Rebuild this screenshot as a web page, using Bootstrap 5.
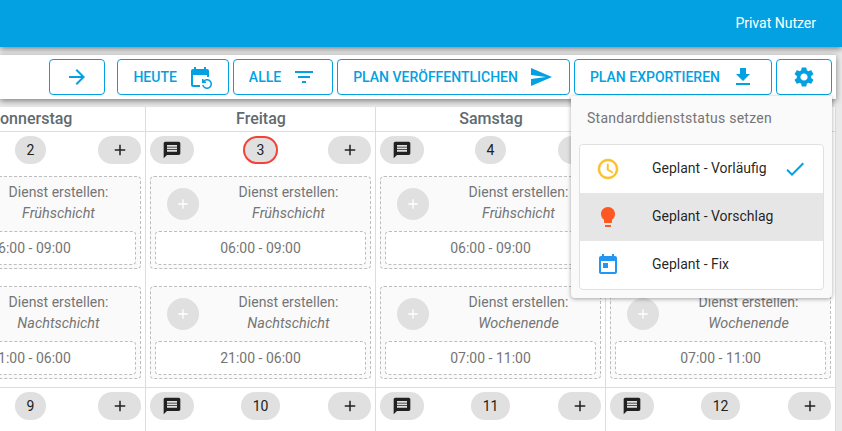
<!DOCTYPE html>
<html lang="de">
  <head>
    <meta charset="UTF-8" />
    <meta name="viewport" content="width=device-width, initial-scale=1" />
    <title>Dienstplan</title>
    <link
      href="https://cdn.jsdelivr.net/npm/bootstrap@5.3.0/dist/css/bootstrap.min.css"
      rel="stylesheet"
    />
    <style>
      html,
      body {
        height: 100%;
        overflow: hidden;
      }
      body {
        background: #e9e9e9;
        font-family: Roboto, "Liberation Sans", sans-serif;
        font-size: 14px;
      }
      svg {
        fill: currentColor;
        display: block;
      }
      .top-bar {
        height: 47px;
        background: #03a1e2;
        color: #fff;
        padding-right: 26px;
        box-shadow: 0 2px 6px rgba(0, 0, 0, 0.45);
        position: relative;
        z-index: 3;
      }
      .page-area {
        width: 836px;
      }
      .tool-bar {
        height: 44px;
        margin-top: 8px;
        padding-right: 4px;
        background: #fff;
        box-shadow: 0 2px 6px rgba(0, 0, 0, 0.45);
        position: relative;
        z-index: 2;
      }
      .tool-btn {
        height: 36px;
        padding: 0 16px 0 15px;
        column-gap: 11px;
        color: #03a1e2;
        background: #fff;
        border: 1px solid #03a1e2;
        border-radius: 4px;
        font-size: 14px;
        font-weight: 500;
        text-transform: uppercase;
      }
      .tool-btn:hover {
        color: #03a1e2;
        background: #fff;
        border-color: #03a1e2;
      }
      .icon-only {
        width: 56px;
        padding: 0;
      }
      .status-menu {
        position: absolute;
        top: 41px;
        right: 4px;
        width: 261px;
        height: 202px;
        padding: 48px 8px 8px;
        background: #fafafa;
        border-radius: 0 0 4px 4px;
        box-shadow: 0 1px 4px rgba(0, 0, 0, 0.35);
      }
      .status-title {
        position: absolute;
        top: 12px;
        left: 16px;
        color: #757575;
        letter-spacing: 0.25px;
      }
      .status-item {
        height: 48px;
        padding: 0 16px;
        border: 0;
        color: rgba(0, 0, 0, 0.87);
      }
      .status-item.picked {
        background: #e6e6e6;
      }
      .status-label {
        margin-left: 32px;
        padding-bottom: 2px;
      }
      .status-list {
        border: 1px solid #e0e0e0;
        border-radius: 4px;
      }
      .clock-icon {
        color: #fbc02d;
        stroke: currentColor;
        stroke-width: 0.5;
      }
      .bulb-icon {
        color: #ff5722;
      }
      .fix-icon {
        color: #2196f3;
      }
      .check-icon {
        color: #03a1e2;
      }
      .week-head,
      .week-row {
        margin-left: -84px;
      }
      .week-area {
        background: #fff;
        margin-top: 8px;
        height: 324px;
        overflow: hidden;
      }
      .day-head {
        width: 230px;
        height: 25px;
        flex: none;
        padding-left: 1px;
        line-height: 24px;
        text-align: center;
        font-size: 16px;
        font-weight: 500;
        color: #5f6b70;
        border-right: 1px solid #ddd;
        border-bottom: 1px solid #ddd;
      }
      .day-cell {
        width: 230px;
        flex: none;
        padding: 4px 4px 8px 4px;
        border-right: 1px solid #ddd;
        border-bottom: 1px solid #ddd;
      }
      /* the second week runs on below the fold */
      #rowTwo .day-cell {
        padding-bottom: 60px;
      }
      .chip-row {
        display: grid;
        grid-template-columns: 1fr auto 1fr;
        align-items: center;
        height: 28px;
      }
      .chip-gray {
        height: 28px;
        background: #e0e0e0;
        border-radius: 14px;
        display: flex;
        align-items: center;
        justify-content: center;
        color: #212121;
      }
      .chip-note {
        width: 44px;
        justify-self: start;
      }
      .chip-add {
        width: 43px;
        justify-self: end;
      }
      .chip-date {
        padding: 0 12px;
      }
      .chip-today {
        border: 2px solid #f44336;
        padding: 0 12px;
      }
      .shift-box {
        height: 93px;
        margin-top: 12px;
        padding: 0 4px 4px;
        background: #fafafa;
        border: 1px dashed #bdbdbd;
        border-radius: 4px;
        color: #757575;
      }
      .shift-box + .shift-box {
        margin-top: 17px;
      }
      .shift-top {
        height: 54px;
        padding-left: 12px;
      }
      .shift-plus {
        width: 32px;
        height: 32px;
        flex: none;
        background: #e0e0e0;
        border-radius: 50%;
        color: #fff;
        display: flex;
        align-items: center;
        justify-content: center;
      }
      .shift-text {
        line-height: 21px;
        text-align: center;
        padding-left: 12px;
        padding-bottom: 2px;
        flex: 1;
      }
      .shift-text em {
        font-size: 14.4px;
      }
      .shift-time {
        height: 34px;
        line-height: 32px;
        text-align: center;
        background: #fff;
        border: 1px dashed #bdbdbd;
        border-radius: 4px;
      }
    </style>
  </head>
  <body>
    <div class="top-bar d-flex align-items-center justify-content-end">
      Privat Nutzer
    </div>

    <div class="page-area">
      <!-- Toolbar with open status menu -->
      <div class="tool-bar d-flex align-items-center justify-content-end gap-1">
        <button class="btn tool-btn icon-only d-flex align-items-center justify-content-center me-2">
          <svg width="24" height="24" viewBox="0 0 24 24"><path d="M12 4l-1.41 1.41L16.17 11H4v2h12.17l-5.58 5.59L12 20l8-8z" /></svg>
        </button>
        <button class="btn tool-btn d-flex align-items-center">
          Heute
          <svg width="24" height="24" viewBox="0 0 24 24"><path d="M21 12V6c0-1.1-.9-2-2-2h-1V2h-2v2H8V2H6v2H5c-1.1 0-2 .9-2 2v14c0 1.1.9 2 2 2h7v-2H5V10h14v2h2zm-5.36 8c.43 1.45 1.77 2.5 3.36 2.5 1.93 0 3.5-1.57 3.5-3.5s-1.57-3.5-3.5-3.5c-.95 0-1.82.38-2.45 1H18V18h-4v-4h1.5v1.43c.9-.88 2.14-1.43 3.5-1.43 2.76 0 5 2.24 5 5s-2.24 5-5 5c-2.42 0-4.44-1.72-4.9-4h1.54z" /></svg>
        </button>
        <button class="btn tool-btn d-flex align-items-center">
          Alle
          <svg width="24" height="24" viewBox="0 0 24 24"><path d="M10 18h4v-2h-4v2zM3 6v2h18V6H3zm3 7h12v-2H6v2z" /></svg>
        </button>
        <button class="btn tool-btn d-flex align-items-center">
          Plan veröffentlichen
          <svg width="24" height="24" viewBox="0 0 24 24"><path d="M2.01 21L23 12 2.01 3 2 10l15 2-15 2z" /></svg>
        </button>
        <button class="btn tool-btn d-flex align-items-center">
          Plan exportieren
          <svg width="24" height="24" viewBox="0 0 24 24"><path d="M19 9h-4V3H9v6H5l7 7 7-7zM5 18v2h14v-2H5z" /></svg>
        </button>
        <button class="btn tool-btn icon-only d-flex align-items-center justify-content-center">
          <svg width="24" height="24" viewBox="0 0 24 24"><path d="M19.14 12.94c.04-.3.06-.61.06-.94 0-.32-.02-.64-.07-.94l2.03-1.58c.18-.14.23-.41.12-.61l-1.92-3.32c-.12-.22-.37-.29-.59-.22l-2.39.96c-.5-.38-1.03-.7-1.62-.94l-.36-2.54c-.04-.24-.24-.41-.48-.41h-3.84c-.24 0-.43.17-.47.41l-.36 2.54c-.59.24-1.13.57-1.62.94l-2.39-.96c-.22-.08-.47 0-.59.22L2.74 8.87c-.12.21-.08.47.12.61l2.03 1.58c-.05.3-.09.63-.09.94s.02.64.07.94l-2.03 1.58c-.18.14-.23.41-.12.61l1.92 3.32c.12.22.37.29.59.22l2.39-.96c.5.38 1.03.7 1.62.94l.36 2.54c.05.24.24.41.48.41h3.84c.24 0 .44-.17.47-.41l.36-2.54c.59-.24 1.13-.56 1.62-.94l2.39.96c.22.08.47 0 .59-.22l1.92-3.32c.12-.22.07-.47-.12-.61l-2.01-1.58zM12 15.6c-1.98 0-3.6-1.62-3.6-3.6s1.62-3.6 3.6-3.6 3.6 1.62 3.6 3.6-1.62 3.6-3.6 3.6z" /></svg>
        </button>

        <div class="status-menu">
          <div class="status-title">Standarddienststatus setzen</div>
          <div class="list-group status-list">
            <div class="list-group-item status-item d-flex align-items-center">
              <svg class="clock-icon" width="24" height="24" viewBox="0 0 24 24"><path d="M11.99 2C6.47 2 2 6.48 2 12s4.47 10 9.99 10C17.52 22 22 17.52 22 12S17.52 2 11.99 2zM12 20c-4.42 0-8-3.58-8-8s3.58-8 8-8 8 3.58 8 8-3.58 8-8 8zm.5-13H11v6l5.25 3.15.75-1.23-4.5-2.67z" /></svg>
              <span class="status-label flex-grow-1">Geplant - Vorläufig</span>
              <svg class="check-icon" width="24" height="24" viewBox="0 0 24 24"><path d="M9 16.17L4.83 12l-1.42 1.41L9 19 21 7l-1.41-1.41z" /></svg>
            </div>
            <div class="list-group-item status-item picked d-flex align-items-center">
              <svg class="bulb-icon" width="24" height="24" viewBox="0 0 24 24"><path d="M9 21c0 .55.45 1 1 1h4c.55 0 1-.45 1-1v-1H9v1zm3-19C8.14 2 5 5.14 5 9c0 2.38 1.19 4.47 3 5.74V17c0 .55.45 1 1 1h6c.55 0 1-.45 1-1v-2.26c1.81-1.27 3-3.36 3-5.74 0-3.86-3.14-7-7-7z" /></svg>
              <span class="status-label">Geplant - Vorschlag</span>
            </div>
            <div class="list-group-item status-item d-flex align-items-center">
              <svg class="fix-icon" width="24" height="24" viewBox="0 0 24 24"><path d="M19 3h-1V1h-2v2H8V1H6v2H5c-1.11 0-1.99.9-1.99 2L3 19c0 1.1.89 2 2 2h14c1.1 0 2-.9 2-2V5c0-1.1-.9-2-2-2zm0 16H5V8h14v11zM7 10h5v5H7z" /></svg>
              <span class="status-label">Geplant - Fix</span>
            </div>
          </div>
        </div>
      </div>

      <!-- Calendar, filled by the script below -->
      <div class="week-area">
        <div class="week-head d-flex" id="weekHead"></div>
        <div class="week-row d-flex" id="rowOne"></div>
        <div class="week-row d-flex" id="rowTwo"></div>
      </div>
    </div>

    <script src="https://cdn.jsdelivr.net/npm/bootstrap@5.3.0/dist/js/bootstrap.bundle.min.js"></script>
    <script>
      const noteIcon =
        '<svg width="20" height="20" viewBox="0 0 24 24"><path d="M20 2H4c-1.1 0-1.99.9-1.99 2L2 22l4-4h14c1.1 0 2-.9 2-2V4c0-1.1-.9-2-2-2zm-2 12H6v-2h12v2zm0-3H6V9h12v2zm0-3H6V6h12v2z" /></svg>';
      const addPath = 'M19 13h-6v6h-2v-6H5v-2h6V5h2v6h6v2z';

      const days = ['Donnerstag', 'Freitag', 'Samstag', 'Sonntag'];
      const firstRow = [
        { date: 2, shifts: [['Frühschicht', '06:00 - 09:00'], ['Nachtschicht', '21:00 - 06:00']] },
        { date: 3, today: true, shifts: [['Frühschicht', '06:00 - 09:00'], ['Nachtschicht', '21:00 - 06:00']] },
        { date: 4, shifts: [['Frühschicht', '06:00 - 09:00'], ['Wochenende', '07:00 - 11:00']] },
        { date: 5, shifts: [['Frühschicht', '06:00 - 09:00'], ['Wochenende', '07:00 - 11:00']] },
      ];

      function chips(day) {
        const dateClass = day.today ? 'chip-today' : 'chip-date';
        return `<div class="chip-row">
          <div class="chip-gray chip-note">${noteIcon}</div>
          <div class="chip-gray ${dateClass}">${day.date}</div>
          <div class="chip-gray chip-add"><svg width="18" height="18" viewBox="0 0 24 24"><path d="${addPath}" /></svg></div>
        </div>`;
      }

      function shiftBox(shift) {
        return `<div class="shift-box">
          <div class="shift-top d-flex align-items-center">
            <div class="shift-plus"><svg width="16" height="16" viewBox="0 0 24 24"><path d="${addPath}" /></svg></div>
            <div class="shift-text">Dienst erstellen:<br /><em>${shift[0]}</em></div>
          </div>
          <div class="shift-time">${shift[1]}</div>
        </div>`;
      }

      document.getElementById('weekHead').innerHTML = days
        .map((d) => `<div class="day-head">${d}</div>`)
        .join('');
      document.getElementById('rowOne').innerHTML = firstRow
        .map((d) => `<div class="day-cell">${chips(d)}${d.shifts.map(shiftBox).join('')}</div>`)
        .join('');
      document.getElementById('rowTwo').innerHTML = [9, 10, 11, 12]
        .map((date) => `<div class="day-cell">${chips({ date })}</div>`)
        .join('');
    </script>
  </body>
</html>
